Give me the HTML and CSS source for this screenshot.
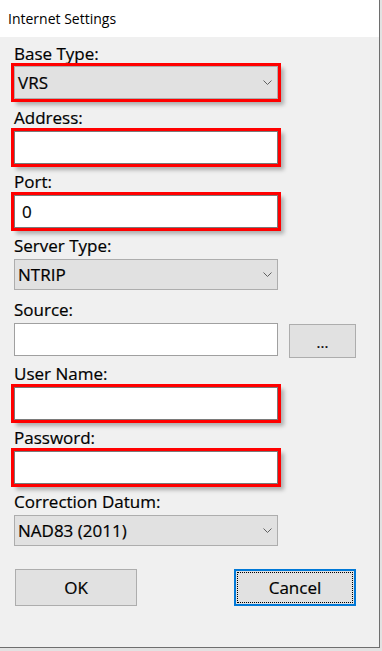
FILE: index.html
```html
<!DOCTYPE html>
<html>
<head>
<meta charset="utf-8">
<link rel="stylesheet" href="styles.css">
</head>
<body>
<div class="window">
  <div class="titlebar">Internet Settings</div>
  <div class="content">
    <div class="row">
      <div class="label">Base Type:</div>
      <div class="combo mark tall"><span>VRS</span><svg class="chev" width="9" height="5" viewBox="0 0 9 5"><path d="M0.5 0.5 L4.5 4.5 L8.5 0.5" fill="none" stroke="#606060" stroke-width="1"/></svg></div>
    </div>
    <div class="row">
      <div class="label">Address:</div>
      <div class="input mark"></div>
    </div>
    <div class="row">
      <div class="label">Port:</div>
      <div class="input mark"><span>0</span></div>
    </div>
    <div class="row">
      <div class="label">Server Type:</div>
      <div class="combo"><span>NTRIP</span><svg class="chev" width="9" height="5" viewBox="0 0 9 5"><path d="M0.5 0.5 L4.5 4.5 L8.5 0.5" fill="none" stroke="#606060" stroke-width="1"/></svg></div>
    </div>
    <div class="row">
      <div class="label">Source:</div>
      <div class="source-line">
        <div class="input plain"></div>
        <div class="btn small">...</div>
      </div>
    </div>
    <div class="row">
      <div class="label">User Name:</div>
      <div class="input mark"></div>
    </div>
    <div class="row">
      <div class="label">Password:</div>
      <div class="input mark"></div>
    </div>
    <div class="row">
      <div class="label">Correction Datum:</div>
      <div class="combo"><span>NAD83 (2011)</span><svg class="chev" width="9" height="5" viewBox="0 0 9 5"><path d="M0.5 0.5 L4.5 4.5 L8.5 0.5" fill="none" stroke="#606060" stroke-width="1"/></svg></div>
    </div>
    <div class="buttons">
      <div class="btn">OK</div>
      <div class="btn focused"><span class="focus">Cancel</span></div>
    </div>
  </div>
</div>
</body>
</html>
```
FILE: styles.css
```css
html, body {
  margin: 0;
  padding: 0;
  background: #e2e2e2;
}
body {
  width: 382px;
  height: 651px;
  overflow: hidden;
  font-family: "Open Sans", "Noto Sans", sans-serif;
  color: #000;
}
.window {
  width: 379px;
  height: 647px;
  border-right: 1px solid #6e6e6e;
  border-bottom: 1px solid #6e6e6e;
  background: #f0f0f0;
  display: flex;
  flex-direction: column;
}
.titlebar {
  height: 37px;
  background: #fff;
  font-size: 14px;
  line-height: 37px;
  padding-left: 8px;
  box-sizing: border-box;
}
.content {
  padding: 7px 0 0 14px;
  display: flex;
  flex-direction: column;
}
.row {
  display: flex;
  flex-direction: column;
  height: 64px;
}
.label {
  font-size: 17px;
  line-height: 18px;
  height: 18px;
  margin-bottom: 4px;
  padding-top: 2px;
  margin-top: -1px;
  -webkit-text-stroke: 0.2px #000;
}
.combo {
  width: 264px;
  height: 31px;
  box-sizing: border-box;
  background: #e1e1e1;
  border: 1px solid #adadad;
  display: flex;
  align-items: center;
  justify-content: space-between;
  padding: 0 5px 0 3px;
  font-size: 17px;
  -webkit-text-stroke: 0.2px #000;
}
.combo.tall {
  height: 33px;
  margin-top: -1px;
}
.input {
  width: 264px;
  height: 33px;
  box-sizing: border-box;
  background: #fff;
  border: 1px solid #7a7a7a;
  display: flex;
  align-items: center;
  padding-left: 7px;
  font-size: 17px;
  -webkit-text-stroke: 0.2px #000;
}
.input.plain {
  border-color: #a0a0a0;
}
.mark {
  box-shadow: 0 0 0 3px #f00, 4px 4px 4px 2px rgba(0, 0, 0, 0.28);
}
.source-line {
  display: flex;
  align-items: flex-start;
  gap: 11px;
}
.btn {
  background: #e1e1e1;
  border: 1px solid #adadad;
  box-sizing: border-box;
  display: flex;
  align-items: center;
  justify-content: center;
  font-size: 17px;
  -webkit-text-stroke: 0.2px #000;
}
.btn.small {
  width: 67px;
  height: 34px;
  margin-top: 1px;
  font-size: 15px;
  padding-top: 2px;
}
.buttons {
  display: flex;
  justify-content: space-between;
  width: 341px;
  margin-top: 13px;
  padding-left: 1px;
}
.buttons .btn {
  width: 122px;
  height: 37px;
}
.btn.focused {
  border: 2px solid #0078d7;
  padding: 1px;
}
.focus {
  flex: 1;
  align-self: stretch;
  display: flex;
  align-items: center;
  justify-content: center;
  border: 1px dotted #000;
}
```
